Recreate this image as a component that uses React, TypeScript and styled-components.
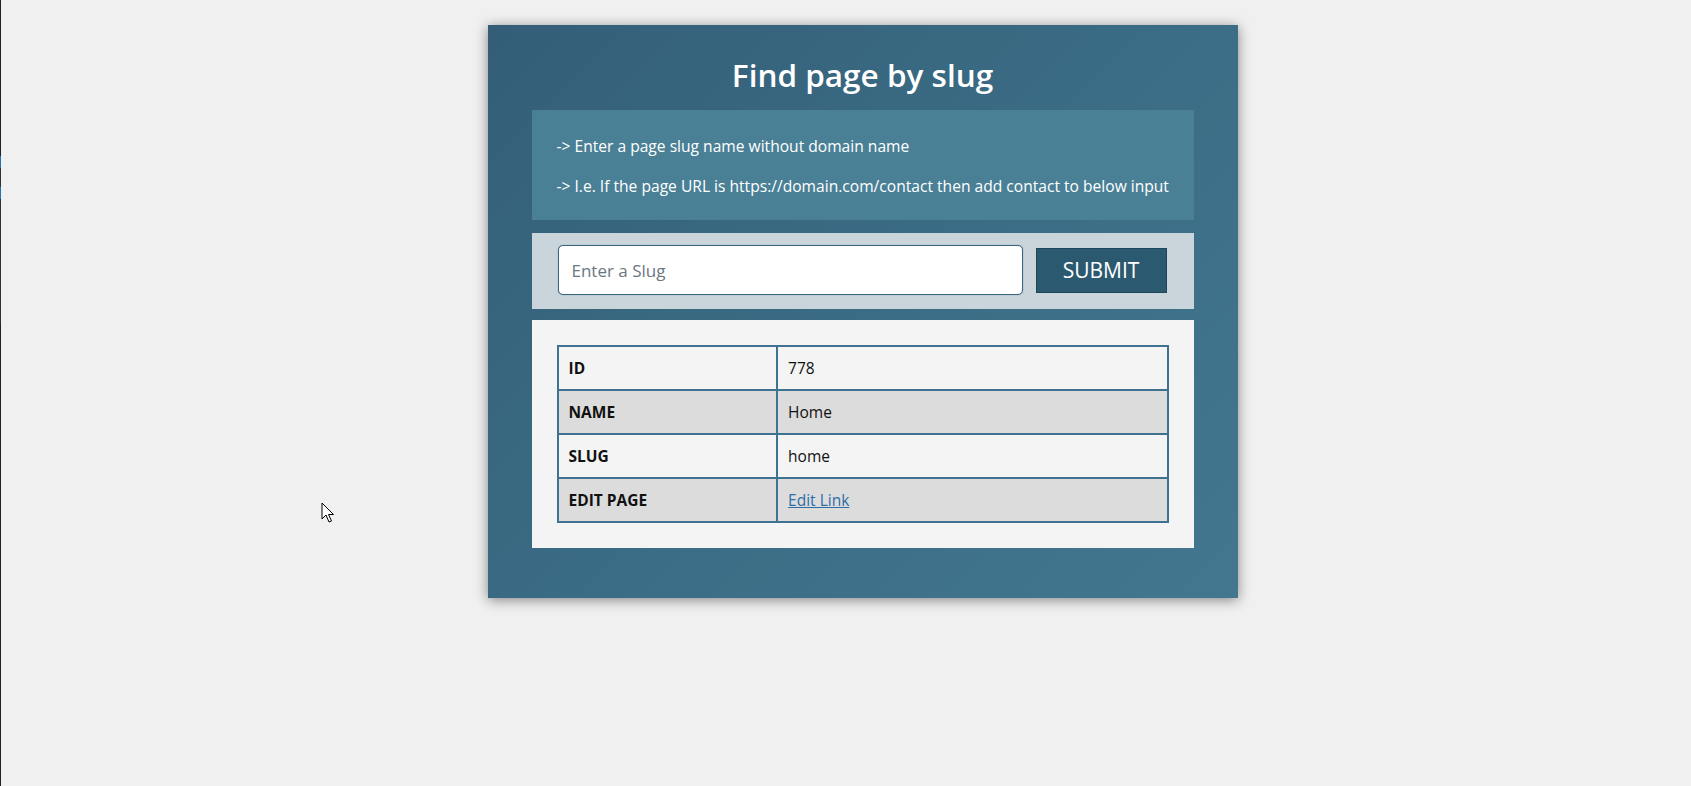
import React from "react";
import styled, { createGlobalStyle } from "styled-components";

const GlobalStyle = createGlobalStyle`
  html, body {
    margin: 0;
    padding: 0;
    background: #f0f0f1;
    font-family: "Open Sans", "Noto Sans", Arial, sans-serif;
  }
  * { box-sizing: border-box; }
`;

const Screen = styled.div`
  position: relative;
  display: flex;
  min-height: 786px;
  overflow: hidden;
`;

const AdminEdge = styled.div`
  width: 1px;
  flex: none;
  display: flex;
  flex-direction: column;
  background: #1d2327;
`;

const EdgeSegment = styled.div<{ $h: number; $c: string }>`
  height: ${(p) => p.$h}px;
  background: ${(p) => p.$c};
  flex: none;
`;

const Main = styled.main`
  flex: 1;
  display: flex;
  justify-content: center;
  align-items: flex-start;
  padding: 25px 0 0 33px;
`;

const Card = styled.section`
  width: 750px;
  padding: 0 44px 50px;
  background: linear-gradient(135deg, #345e77 0%, #3b6c85 50%, #42778f 100%);
  box-shadow: 0 2px 12px rgba(0, 0, 0, 0.45);
  display: flex;
  flex-direction: column;
`;

const Title = styled.h1`
  margin: 30px 0 15px;
  font-size: 31.5px;
  line-height: 40px;
  font-weight: 600;
  color: #ffffff;
  text-align: center;
`;

const InfoBox = styled.div`
  background: #4a8096;
  padding: 25px 15px 23px 25px;
  display: flex;
  flex-direction: column;
  gap: 18px;
`;

const InfoLine = styled.p`
  margin: 0;
  font-size: 15.6px;
  line-height: 22px;
  color: #ffffff;
  white-space: nowrap;
`;

const FormBox = styled.form`
  margin-top: 13px;
  background: #c9d4db;
  padding: 12px 27px 14px 26px;
  display: flex;
  align-items: center;
  gap: 13px;
`;

const SlugInput = styled.input`
  flex: 1;
  height: 50px;
  border: 1px solid #3b6680;
  border-radius: 5px;
  background: #ffffff;
  padding: 0 13px;
  font-family: inherit;
  font-size: 17px;
  color: #333;
  box-shadow: 0 0 1px rgba(40, 80, 100, 0.6);
  &::placeholder {
    color: #6b7780;
  }
  &:focus { outline: none; }
`;

const SubmitButton = styled.button`
  width: 131px;
  height: 45px;
  background: #2b5970;
  border: 1px solid #1f4558;
  color: #ffffff;
  font-family: inherit;
  font-size: 21px;
  font-weight: 400;
  cursor: pointer;
`;

const ResultBox = styled.div`
  margin-top: 11px;
  background: #f4f4f4;
  padding: 25px 25px 25px;
`;

const Table = styled.table`
  width: 100%;
  border-collapse: collapse;
  border: 2px solid #3f7190;
`;

const Row = styled.tr<{ $alt?: boolean }>`
  background: ${(p) => (p.$alt ? "#dcdcdc" : "#f4f4f4")};
`;

const Cell = styled.td<{ $head?: boolean }>`
  height: 44px;
  padding: 0 10px;
  border: 2px solid #3f7190;
  font-size: 15.5px;
  color: #111;
  font-weight: ${(p) => (p.$head ? 700 : 400)};
  width: ${(p) => (p.$head ? "36%" : "auto")};
`;

const EditLink = styled.a`
  color: #2e6ea5;
  text-decoration: underline;
`;

const Cursor = styled.svg`
  position: absolute;
  left: 321px;
  top: 502px;
  pointer-events: none;
`;

const rows: { label: string; value: React.ReactNode }[] = [
  { label: "ID", value: "778" },
  { label: "NAME", value: "Home" },
  { label: "SLUG", value: "home" },
  { label: "EDIT PAGE", value: <EditLink href="#">Edit Link</EditLink> },
];

export default function App() {
  return (
    <>
      <GlobalStyle />
      <Screen>
        <AdminEdge>
          <EdgeSegment $h={156} $c="#1d2327" />
          <EdgeSegment $h={12} $c="#2271b1" />
          <EdgeSegment $h={19} $c="#2c3338" />
          <EdgeSegment $h={12} $c="#2271b1" />
          <EdgeSegment $h={124} $c="#2c3338" />
        </AdminEdge>
        <Main>
          <Card>
            <Title>Find page by slug</Title>
            <InfoBox>
              <InfoLine>-&gt; Enter a page slug name without domain name</InfoLine>
              <InfoLine>
                -&gt; I.e. If the page URL is https://domain.com/contact then add contact to below input
              </InfoLine>
            </InfoBox>
            <FormBox onSubmit={(e) => e.preventDefault()}>
              <SlugInput type="text" placeholder="Enter a Slug" />
              <SubmitButton type="submit">SUBMIT</SubmitButton>
            </FormBox>
            <ResultBox>
              <Table>
                <tbody>
                  {rows.map((r, i) => (
                    <Row key={r.label} $alt={i % 2 === 1}>
                      <Cell $head>{r.label}</Cell>
                      <Cell>{r.value}</Cell>
                    </Row>
                  ))}
                </tbody>
              </Table>
            </ResultBox>
          </Card>
        </Main>
        <Cursor width="14" height="22" viewBox="0 0 14 22">
          <path
            d="M1 1 L1 17 L5 13 L8 20 L10.5 19 L7.5 12.5 L12.5 12.5 Z"
            fill="#ffffff"
            stroke="#000000"
            strokeWidth="1"
            strokeLinejoin="miter"
          />
        </Cursor>
      </Screen>
    </>
  );
}
